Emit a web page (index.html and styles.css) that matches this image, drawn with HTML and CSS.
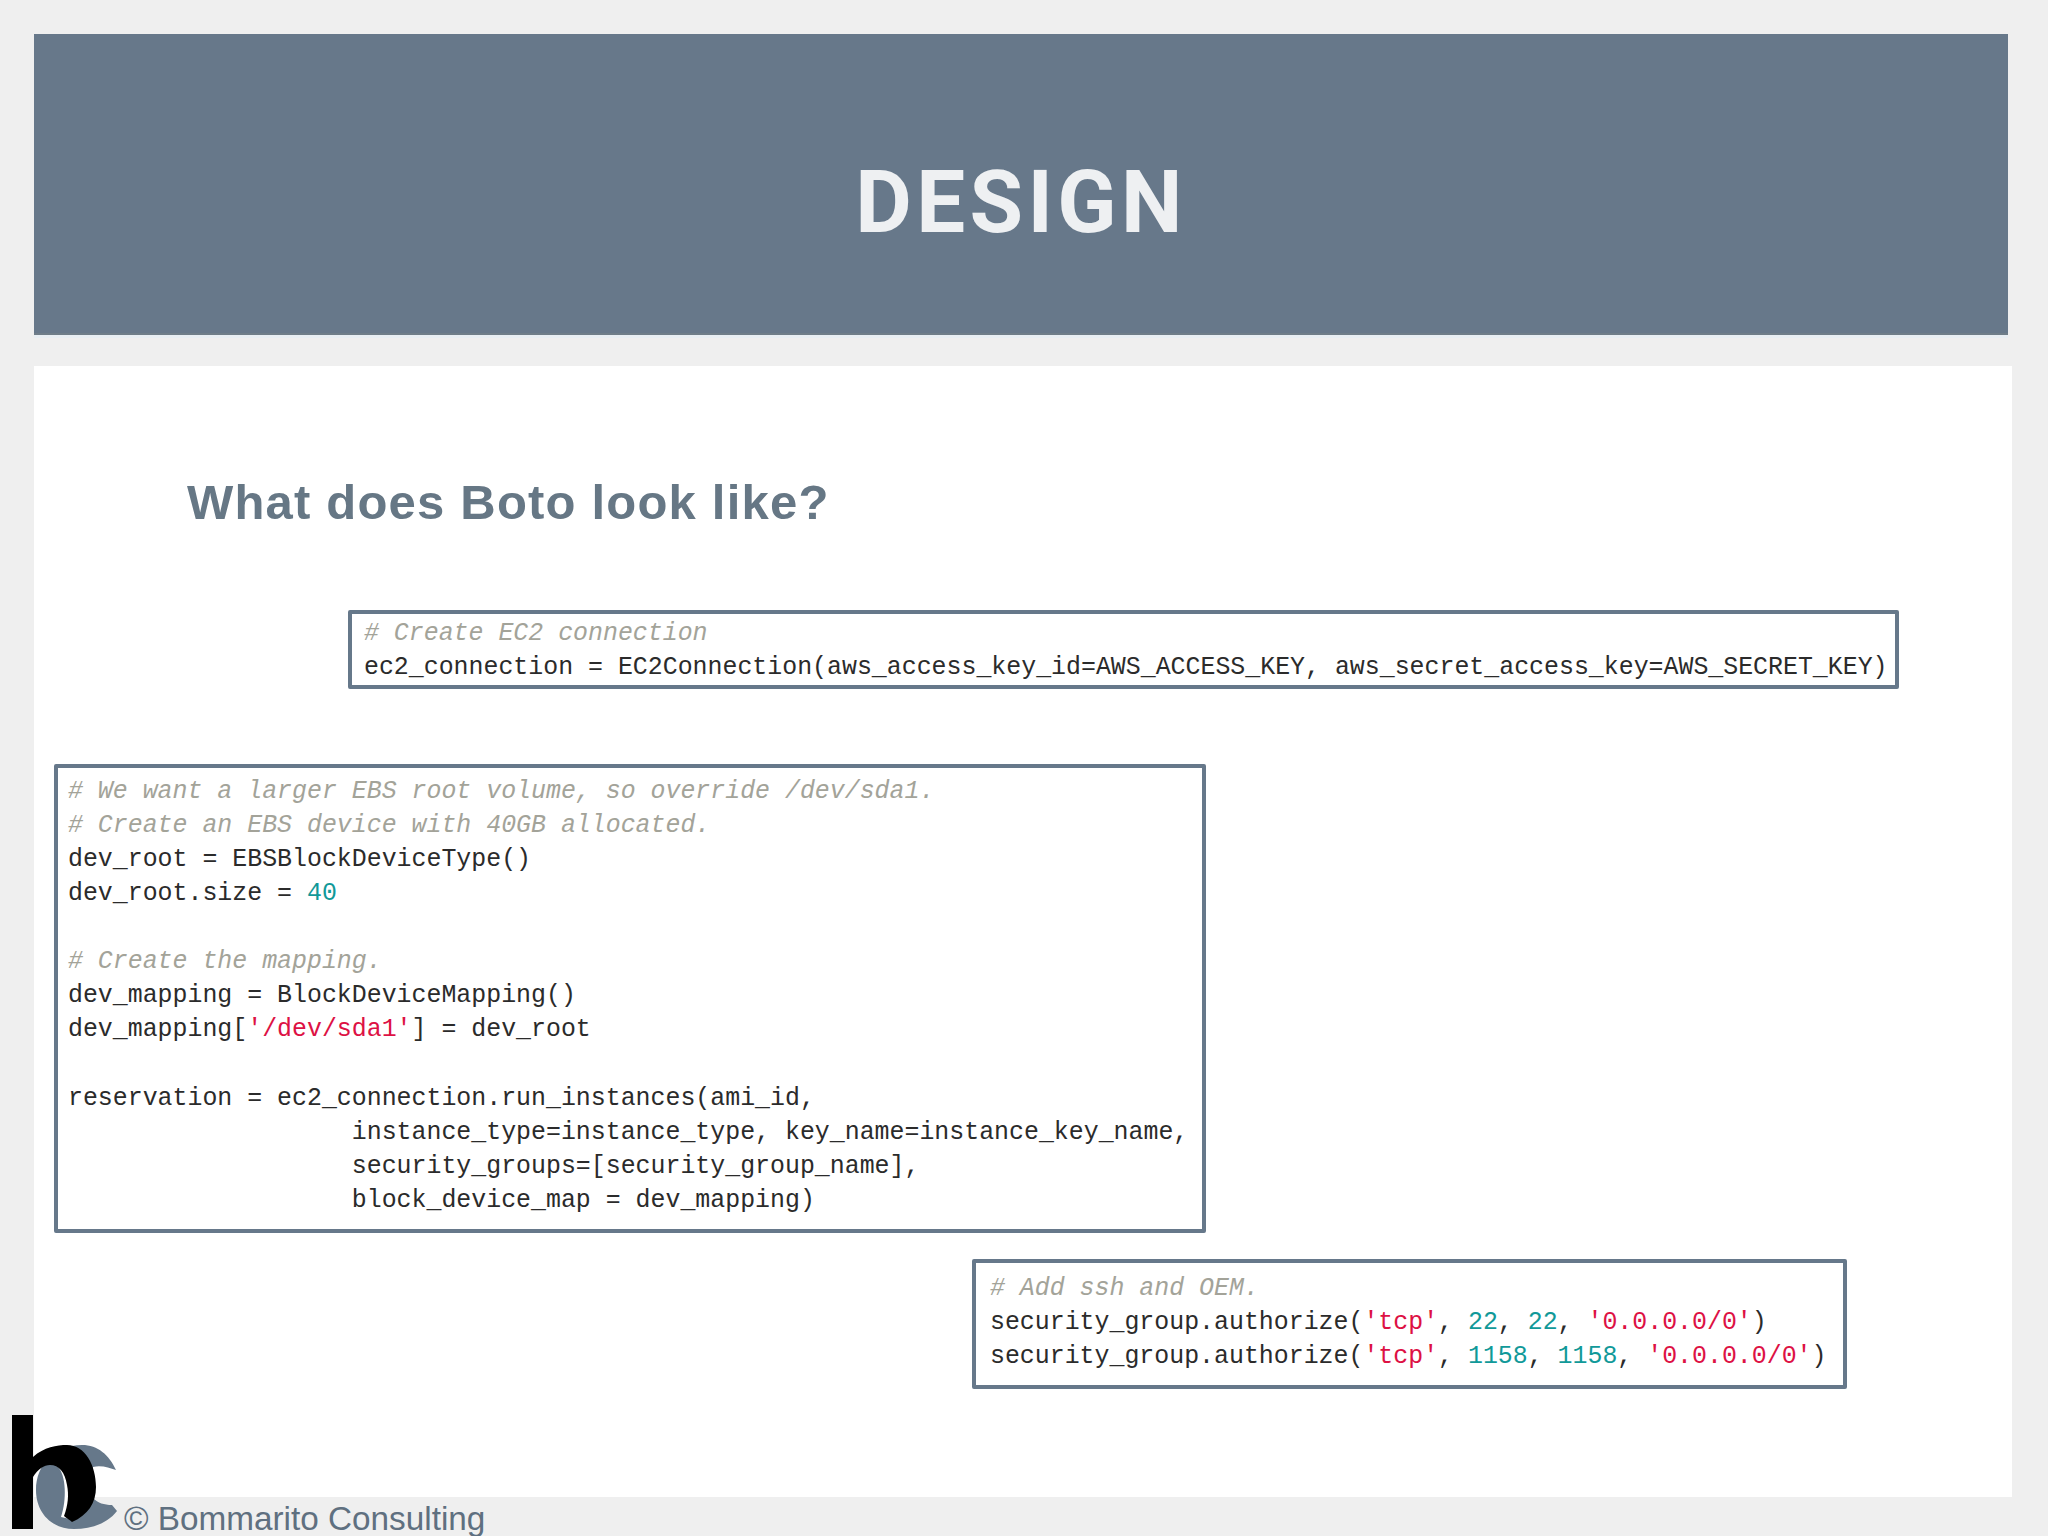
FILE: index.html
```html
<!DOCTYPE html>
<html lang="en">
<head>
    <meta charset="UTF-8">
    <title>Design</title>
    <link rel="stylesheet" href="styles.css">
</head>
<body>

    <header class="title-bar">
        <h1>DESIGN</h1>
    </header>

    <main class="content">
        <h2>What does Boto look like?</h2>

<pre class="code code-connect"><span class="cm"># Create EC2 connection</span>
ec2_connection = EC2Connection(aws_access_key_id=AWS_ACCESS_KEY, aws_secret_access_key=AWS_SECRET_KEY)</pre>

<pre class="code code-launch"><span class="cm"># We want a larger EBS root volume, so override /dev/sda1.</span>
<span class="cm"># Create an EBS device with 40GB allocated.</span>
dev_root = EBSBlockDeviceType()
dev_root.size = <span class="num">40</span>

<span class="cm"># Create the mapping.</span>
dev_mapping = BlockDeviceMapping()
dev_mapping[<span class="str">'/dev/sda1'</span>] = dev_root

reservation = ec2_connection.run_instances(ami_id,
                   instance_type=instance_type, key_name=instance_key_name,
                   security_groups=[security_group_name],
                   block_device_map = dev_mapping)</pre>

<pre class="code code-ports"><span class="cm"># Add ssh and OEM.</span>
security_group.authorize(<span class="str">'tcp'</span>, <span class="num">22</span>, <span class="num">22</span>, <span class="str">'0.0.0.0/0'</span>)
security_group.authorize(<span class="str">'tcp'</span>, <span class="num">1158</span>, <span class="num">1158</span>, <span class="str">'0.0.0.0/0'</span>)</pre>
    </main>

    <footer class="footer">
        <!-- logo -->
        <svg class="logo" width="112" height="122" viewBox="0 0 112 122">
            <path fill="#66788a" d="M104 55 C97 40 86 30 70 30 C42 30 24 50 24 75 C24 98 40 114 62 114 C80 114 96 108 105 96 L100 90 C92 90 86 88 81 83 L81 52 C90 50 97 53 104 55 Z"/>
            <path fill="#fff" d="M46 52 C54 60 55 85 49 102 L58 104 L62 60 Z"/>
            <path fill="#000" d="M0 0 H21 V114 H0 Z"/>
            <path fill="#000" d="M21 42 C32 32 45 30 55 30 C73 30 84 50 84 72 C84 88 76 100 60 107 C58 105 54 103 52 101 C56 90 57 80 55 70 C53 57 47 50 38 50 C32 50 26 54 21 62 Z"/>
        </svg>
        <span class="copyright">© Bommarito Consulting</span>
    </footer>

</body>
</html>
```

FILE: styles.css
```css
body {
    margin: 0;
    height: 1536px;
    overflow: hidden;
    position: relative;
    background-color: #efefef;
    font-family: "Liberation Sans", Arial, sans-serif;
}
.title-bar {
    box-sizing: border-box;
    height: 301px;
    width: 1974px;
    margin: 34px 0 0 34px;
    padding-top: 118px;
    background-color: #67788a;
    border-bottom: 2px solid #6f7d88;
    box-shadow: 0 3px 0 #e8eef3;
}
h1 {
    margin: 0;
    text-align: center;
    color: #eef0f2;
    font-family: Roboto, "Liberation Sans", sans-serif;
    font-weight: 700;
    font-size: 87px;
    line-height: 100px;
    letter-spacing: 4.4px;
}
.content {
    box-sizing: border-box;
    height: 1131px;
    width: 1978px;
    margin: 31px 0 0 34px;
    padding-top: 106px;
    background: white;
}
h2 {
    margin: 0 0 0 153px;
    color: #667785;
    font-size: 49px;
    line-height: 60px;
    letter-spacing: 1.2px;
}
.code {
    box-sizing: border-box;
    margin: 0;
    border: 4px solid #66788a;
    border-radius: 2px;
    font-family: "Liberation Mono", "Courier New", monospace;
    font-size: 24.9px;
    line-height: 34.05px;
    color: #2b2b2b;
}
.code-connect {
    width: 1551px;
    margin: 78px 0 0 314px;
    padding: 2px 0 1px 12px;
}
.code-launch {
    width: 1152px;
    margin: 75px 0 0 20px;
    padding: 6px 0 12px 10px;
}
.code-ports {
    width: 875px;
    margin: 26px 0 0 938px;
    padding: 8px 0 12px 14px;
}
.cm {
    color: #a3a399;
    font-style: italic;
}
.str {
    color: #dd1144;
}
.num {
    color: #119999;
}
.footer {
    box-sizing: border-box;
    height: 39px;
    display: flex;
    align-items: flex-start;
    padding: 2px 0 0 124px;
}
.copyright {
    color: #5f7080;
    font-size: 33.3px;
    line-height: 39px;
}
.logo {
    position: absolute;
    left: 12px;
    top: 1415px;
}
```
